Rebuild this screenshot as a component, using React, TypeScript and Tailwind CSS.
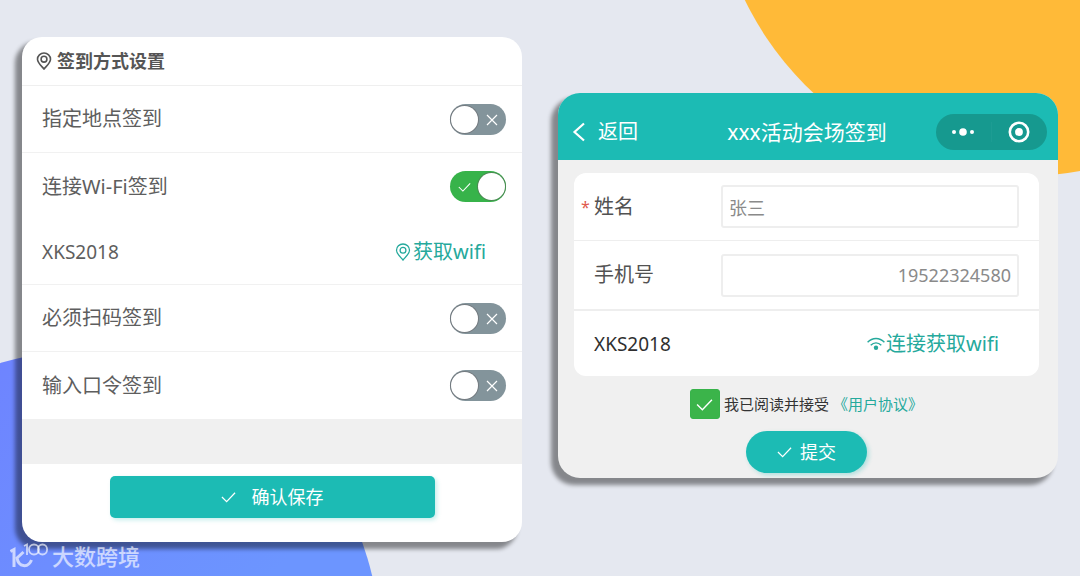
import React, { useState } from 'react';

function PinIcon({ className }: { className: string }) {
  return (
    <svg viewBox="0 0 16 18" className={className} fill="none" stroke="currentColor" aria-hidden="true">
      <path d="M8 17C6.200 14.600 1.500 11 1.500 7.200a6.500 6.200 0 0 1 13 0C14.500 11 9.800 14.600 8 17Z" />
      <circle cx="8" cy="7.200" r="2.900" />
    </svg>
  );
}

function CheckIcon({ className }: { className: string }) {
  return (
    <svg viewBox="0 0 16 12" className={className} fill="none" stroke="currentColor" strokeWidth="1.300" aria-hidden="true">
      <path d="M1 6l5 5 9-9.500" />
    </svg>
  );
}

function WifiIcon() {
  return (
    <svg viewBox="0 0 18 14" className="h-[14px] w-[18px]" fill="none" stroke="currentColor" strokeWidth="1.400" aria-hidden="true">
      <path d="M.6 5.200C5.500.2 12.500.2 17.400 5.200" />
      <path d="M3.700 8.300c3.200-3.200 7.400-3.200 10.600 0" />
      <circle cx="9" cy="10.800" r="2.200" fill="currentColor" stroke="none" />
    </svg>
  );
}

function Toggle({ id, initial = false }: { id: string; initial?: boolean }) {
  const [on, setOn] = useState(initial);
  return (
    <span className="relative flex shrink-0">
      <input
        id={id}
        type="checkbox"
        checked={on}
        onChange={() => setOn(!on)}
        className="h-[31px] w-14 appearance-none rounded-full bg-[#83949b] checked:bg-[#37b34a]"
      />
      <span
        className={
          on
            ? 'pointer-events-none absolute top-[2px] right-[1px] size-[27px] rounded-full bg-white shadow-[0_0_0_1px_#4b8a53]'
            : 'pointer-events-none absolute top-[2px] left-[1px] size-[27px] rounded-full bg-white shadow-[0_0_0_1px_#747b80]'
        }
      />
      {on ? (
        <CheckIcon className="pointer-events-none absolute top-[11px] left-2 h-[10px] w-[13px] text-white" />
      ) : (
        <svg viewBox="0 0 12 12" className="pointer-events-none absolute top-[10px] right-2 size-[12px] text-white" stroke="currentColor" strokeWidth="1.200" aria-hidden="true">
          <path d="M1 1l10 10M11 1L1 11" />
        </svg>
      )}
    </span>
  );
}

function SettingRow({ id, label, on, line = true }: { id: string; label: string; on?: boolean; line?: boolean }) {
  return (
    <div className={line ? 'flex h-[67px] items-center justify-between border-b border-[#f1f1f1] pr-4 pl-5' : 'flex h-[67px] items-center justify-between pr-4 pl-5'}>
      <label htmlFor={id}>{label}</label>
      <Toggle id={id} initial={on} />
    </div>
  );
}

function SettingsCard() {
  return (
    <section className="overflow-hidden rounded-[20px] bg-white text-[20px] leading-[28px] text-[#5e5e5e] shadow-[-6px_6px_4px_1px_rgba(0,0,0,0.42)]">
      <h2 className="flex h-[49px] items-center gap-[5px] border-b border-[#efefef] pl-[14px] text-[18px] font-bold text-[#555555]">
        <PinIcon className="h-[18px] w-[16px] stroke-[1.600]" />
        签到方式设置
      </h2>
      <SettingRow id="place" label="指定地点签到" />
      <SettingRow id="wifi" label="连接Wi-Fi签到" on line={false} />
      <div className="flex h-[65px] items-center justify-between border-b border-[#f1f1f1] pr-9 pl-5">
        <span className="text-[19px]">XKS2018</span>
        <button type="button" className="flex items-center gap-[2px] text-[#25a99c]">
          <PinIcon className="h-[18px] w-[16px] stroke-[1.300]" />
          获取wifi
        </button>
      </div>
      <SettingRow id="scan" label="必须扫码签到" />
      <SettingRow id="code" label="输入口令签到" line={false} />
      <div className="h-[45px] bg-[#f0f0f0]" />
      <div className="flex justify-center pt-3 pb-6">
        <button type="button" className="flex h-[42px] w-[65%] items-center justify-center gap-4 rounded-[5px] bg-[#1cbbb4] text-[18px] text-white shadow-[2px_2px_4px_rgba(28,187,180,0.25)]">
          <CheckIcon className="h-[12px] w-[15px]" />
          确认保存
        </button>
      </div>
    </section>
  );
}

const fieldClass =
  'h-[43px] w-[298px] min-w-0 rounded-[3px] border-2 border-[#eeeeee] bg-white px-[6px] text-[18px] text-[#8a8a8a] outline-none';

function CheckInCard() {
  const [agreed, setAgreed] = useState(true);
  return (
    <section className="mt-14 overflow-hidden rounded-[22px] bg-[#f0f0f0] text-[20px] leading-[28px] text-[#525252] shadow-[-6px_6px_4px_1px_rgba(0,0,0,0.42)]">
      <header className="flex h-[67px] items-center justify-between bg-[#1cbbb4] pt-[10px] pr-[11px] pl-[14px] text-white">
        <button type="button" className="flex items-center gap-3">
          <svg viewBox="0 0 14 20" className="h-5 w-[14px]" fill="none" stroke="currentColor" strokeWidth="2.200" aria-hidden="true">
            <path d="M12 1.500L2.500 10l9.500 8.500" />
          </svg>
          返回
        </button>
        <h1 className="pl-10 text-[21px]">xxx活动会场签到</h1>
        <div className="flex h-9 w-[111px] items-center rounded-full bg-[#16998f]">
          <button type="button" aria-label="更多" className="flex flex-1 items-center justify-center">
            <svg viewBox="0 0 24 8" className="h-2 w-6" fill="currentColor" aria-hidden="true">
              <circle cx="3" cy="4" r="2" />
              <circle cx="12" cy="4" r="3.800" />
              <circle cx="21" cy="4" r="2" />
            </svg>
          </button>
          <span className="h-5 w-px bg-[#1d9c93]" />
          <button type="button" aria-label="关闭" className="flex flex-1 items-center justify-center">
            <svg viewBox="0 0 22 22" className="size-[22px]" aria-hidden="true">
              <circle cx="11" cy="11" r="9.200" fill="none" stroke="currentColor" strokeWidth="2.600" />
              <circle cx="11" cy="11" r="3.900" fill="currentColor" />
            </svg>
          </button>
        </div>
      </header>
      <form className="pt-[13px] pr-[19px] pb-[5px] pl-4" onSubmit={(e: React.FormEvent) => e.preventDefault()}>
        <div className="rounded-[12px] bg-white">
          <div className="flex h-[68px] items-center justify-between border-b border-[#eeeeee] pr-5 pl-[7px]">
            <label htmlFor="name" className="flex items-center gap-[5px]">
              <span className="w-2 text-[16px] text-[#e05a4f]">*</span>
              姓名
            </label>
            <input id="name" type="text" defaultValue="张三" className={fieldClass} />
          </div>
          <div className="flex h-[70px] items-center justify-between border-b-2 border-[#eeeeee] pr-5 pl-5">
            <label htmlFor="phone">手机号</label>
            <input id="phone" type="tel" defaultValue="19522324580" className={`${fieldClass} text-right`} />
          </div>
          <div className="flex h-[65px] items-center justify-between pr-10 pl-5">
            <span className="text-[19px] text-[#2f2f2f]">XKS2018</span>
            <button type="button" className="flex items-center gap-px text-[#25a99c]">
              <WifiIcon />
              连接获取wifi
            </button>
          </div>
        </div>
        <div className="mt-[13px] flex h-[30px] items-center justify-center text-[15px] text-[#333333]">
          <span className="relative mr-1 flex">
            <input
              id="agree"
              type="checkbox"
              checked={agreed}
              onChange={() => setAgreed(!agreed)}
              className="size-[30px] appearance-none rounded-[3px] border border-[#37b34a] bg-white checked:bg-[#3bb44a]"
            />
            {agreed && <CheckIcon className="pointer-events-none absolute top-[9px] left-[6px] h-[13px] w-[17px] text-white" />}
          </span>
          <label htmlFor="agree">我已阅读并接受</label>
          <a href="#agreement" className="pl-1 text-[#25a99c]">《用户协议》</a>
        </div>
        <button type="submit" className="mx-auto mt-3 flex h-[42px] w-[121px] items-center justify-center gap-2 rounded-full bg-[#1cbbb4] text-[18px] text-white shadow-[2px_2px_4px_rgba(28,187,180,0.3)]">
          <CheckIcon className="h-[12px] w-[15px]" />
          提交
        </button>
      </form>
    </section>
  );
}

function Watermark() {
  return (
    <div className="absolute bottom-[6px] left-[10px] flex items-center gap-1 text-[22px] leading-[28px] font-medium text-white/65">
      <svg viewBox="0 0 38 28" className="h-7 w-[38px]" fill="none" stroke="currentColor" strokeWidth="3" aria-hidden="true">
        <path d="M.5 9.500L4 7.500V25" />
        <path d="M13.500 10L7 16c1.500 9 11 10.500 14.500 2" />
        <path d="M14 4l3-1.500V13" strokeWidth="1.800" />
        <ellipse cx="24" cy="7.500" rx="5" ry="5" strokeWidth="1.800" />
        <ellipse cx="32.500" cy="7.500" rx="4.600" ry="5" strokeWidth="1.800" />
      </svg>
      大数跨境
    </div>
  );
}

export default function App() {
  return (
    <div className="relative isolate min-h-screen overflow-hidden bg-[#e5e8f0] font-['Noto_Sans','Noto_Sans_CJK_SC',sans-serif]">
      <svg className="absolute top-0 right-0 -z-10 h-[180px] w-[340px]" viewBox="740 0 340 180" aria-hidden="true">
        <circle cx="1025" cy="-135" r="311" fill="#ffba38" />
      </svg>
      <svg className="absolute bottom-0 left-0 -z-10 h-[226px] w-[380px]" viewBox="0 350 380 226" aria-hidden="true">
        <defs>
          <linearGradient id="dusk" x1="0" y1="0" x2="1" y2="1">
            <stop offset="0" stopColor="#6f7dff" />
            <stop offset="0.600" stopColor="#6c95ff" />
          </linearGradient>
        </defs>
        <circle cx="87" cy="643" r="293" fill="url(#dusk)" />
      </svg>
      <main className="grid grid-cols-2 items-start gap-9 px-[22px] pt-[37px] pb-[34px]">
        <SettingsCard />
        <CheckInCard />
      </main>
      <Watermark />
    </div>
  );
}
